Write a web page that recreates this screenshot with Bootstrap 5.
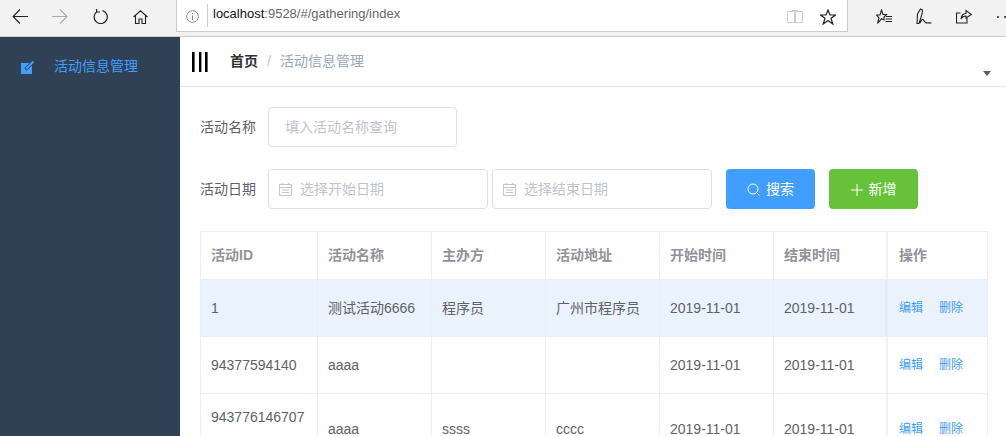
<!DOCTYPE html>
<html lang="zh-CN">
<head>
    <meta charset="UTF-8">
    <meta name="viewport" content="width=device-width, initial-scale=1.0">
    <title>活动信息管理</title>
    <link href="https://cdn.jsdelivr.net/npm/bootstrap@5.3.0/dist/css/bootstrap.min.css" rel="stylesheet">
    <style>
        html, body { height: 100%; overflow: hidden; }
        body { font-family: "Liberation Sans", "Noto Sans CJK SC", sans-serif; font-size: 14px; color: #606266; background: #fff; }
        .edge-bar { height: 37px; background: #f2f2f2; border-bottom: 1px solid #ccc; }
        .edge-btn { width: 40px; height: 33px; flex: none; }
        .edge-url { width: 672px; height: 32px; margin: 0 16px; background: #fff; border: 1px solid #ccc; border-top: 0; flex: none; font-size: 13px; color: #666; }
        .edge-url b { font-weight: 400; color: #111; }
        .url-info { width: 30px; height: 33px; flex: none; }
        .url-text { border-left: 1px solid #ccc; height: 23px; padding-left: 5px; line-height: 20px; margin-top: 4px; }
        .url-book { width: 28px; height: 33px; flex: none; }
        .url-star { width: 38px; height: 33px; flex: none; }
        .app-shell { height: 399px; }
        .side-menu { width: 180px; background: #304156; flex: none; color: #409eff; padding: 19px 0 0 21px; }
        .side-menu span { margin-left: 15px; }
        .main-pane { flex: 1; min-width: 0; overflow: hidden; }
        .top-nav { height: 50px; border-bottom: 1px solid #e6e6e6; padding: 0 0 0 12px; position: relative; }
        .crumb { margin-left: 22px; font-weight: 700; color: #303133; }
        .crumb-sep { margin: 0 9px; color: #c0c4cc; }
        .crumb-now { color: #97a8be; }
        .nav-caret { position: absolute; right: 15px; top: 34px; width: 0; height: 0; border: 4px solid transparent; border-top: 5px solid #5a5e66; border-bottom: 0; }
        .query-area { padding: 20px 18px 0 20px; }
        .field-row { height: 40px; margin-bottom: 22px; }
        .field-label { width: 68px; flex: none; }
        .fake-input { height: 40px; border: 1px solid #dcdfe6; border-radius: 4px; color: #c0c4cc; background: #fff; flex: none; }
        .name-input { width: 189px; padding-left: 16px; }
        .date-input { width: 220px; padding-left: 10px; margin-right: 4px; }
        .date-input svg { margin-right: 8px; }
        .act-btn { width: 89px; height: 40px; border: 0; border-radius: 4px; color: #fff; font-size: 14px; padding: 0; }
        .act-search { background: #409eff; margin-left: 10px; }
        .act-add { background: #67c23a; margin-left: 14px; }
        .act-btn svg { margin-right: 6px; }
        .data-grid { width: 788px; margin: 0; table-layout: fixed; border-collapse: separate; border-spacing: 0; border-top: 1px solid #ebeef5; border-left: 1px solid #ebeef5; color: #606266; }
        .data-grid th, .data-grid td { border: 0; border-right: 1px solid #ebeef5; border-bottom: 1px solid #ebeef5; padding: 0 10px; vertical-align: middle; font-size: 14px; line-height: 23px; background: transparent; color: inherit; box-shadow: none; }
        .data-grid th { height: 48px; color: #909399; font-weight: 700; }
        .data-grid td { height: 57px; }
        .data-grid td.tall-cell { height: 71px; padding-bottom: 23px; }
        .data-grid tr.row-now td { background-color: #eaf2fd; }
        .data-grid .col-fade { background-image: linear-gradient(to left, rgba(0,0,0,.05), transparent 3px); }
        .data-grid .col-ops { padding: 0 0 0 11px; white-space: nowrap; }
        .op-link { font-size: 12px; color: #409eff; text-decoration: none; margin-right: 16px; }
        .op-link:last-child { margin-right: 0; }
    </style>
</head>
<body>
    <div class="edge-bar d-flex">
        <div class="edge-btn d-flex align-items-center justify-content-center">
            <svg width="16" height="15" viewBox="0 0 16 15" fill="none" stroke="#222" stroke-width="1.1"><path d="M1 7.5H16M8 .5L1 7.5L8 14.5"/></svg>
        </div>
        <div class="edge-btn d-flex align-items-center justify-content-center">
            <svg width="16" height="15" viewBox="0 0 16 15" fill="none" stroke="#aaa" stroke-width="1.1"><path d="M0 7.5H15M8 .5L15 7.5L8 14.5"/></svg>
        </div>
        <div class="edge-btn d-flex align-items-center justify-content-center">
            <svg width="15" height="15" viewBox="0 0 15 15" fill="none" stroke="#222" stroke-width="1.2"><path d="M4 2.5A6.6 6.6 0 1 0 9.5 1.6M3.6 0V3H7"/></svg>
        </div>
        <div class="edge-btn d-flex align-items-center justify-content-center">
            <svg width="15" height="14" viewBox="0 0 15 14" fill="none" stroke="#222" stroke-width="1.1"><path d="M.5 7L7.5 .8L14.5 7M2.5 5.5V13.5H6V9H9V13.5H12.5V5.5"/></svg>
        </div>
        <div class="edge-url d-flex">
            <div class="url-info d-flex align-items-center justify-content-center">
                <svg width="13" height="13" viewBox="0 0 13 13" fill="none" stroke="#888"><circle cx="6.5" cy="6.5" r="5.8"/><path d="M6.5 5.5V10M6.5 3V4"/></svg>
            </div>
            <div class="url-text flex-grow-1"><b>localhost</b>:9528/#/gathering/index</div>
            <div class="url-book d-flex align-items-center justify-content-center">
                <svg width="16" height="14" viewBox="0 0 16 14" fill="none" stroke="#ccc"><path d="M.5 1.5H7.5V12.5H.5ZM8.5 1.5H15.5V12.5H8.5ZM5 .5H11"/></svg>
            </div>
            <div class="url-star d-flex align-items-center justify-content-center">
                <svg width="16" height="16" viewBox="0 0 16 16" fill="none" stroke="#222" stroke-width="1.2"><path d="M8 1L10 6H15.5L11 9.3L12.8 15L8 11.5L3.2 15L5 9.3L.5 6H6Z"/></svg>
            </div>
        </div>
        <div class="edge-btn d-flex align-items-center justify-content-center">
            <svg width="16" height="16" viewBox="0 0 16 16" fill="none" stroke="#222" stroke-width="1.1"><path d="M5.5 1L7 5.5H10.5L8 8V11L5.5 9.8L1.5 14.5L3 9L.5 6H4ZM10 7.5H16M9.5 10H16M9.5 12.5H16"/></svg>
        </div>
        <div class="edge-btn d-flex align-items-center justify-content-center">
            <svg width="16" height="17" viewBox="0 0 16 17" fill="none" stroke="#222" stroke-width="1.1"><path d="M1 15.5L1.5 6L4.5 1L6.5 2L6 6L3 15.5ZM4 15C7 8 7.5 13 9.5 14.5C11 15.5 13 14.5 15.5 15"/></svg>
        </div>
        <div class="edge-btn d-flex align-items-center justify-content-center">
            <svg width="16" height="15" viewBox="0 0 16 15" fill="none" stroke="#222" stroke-width="1.1"><path d="M4.5 4H.5V14H11V9M5 10C5 6 8 4.5 10 4.5V1.5L15.5 5.5L10 9V7C8 7 6 8 5 10Z"/></svg>
        </div>
        <div class="edge-btn d-flex align-items-center justify-content-center">
            <svg width="16" height="4" viewBox="0 0 16 4" fill="#222"><circle cx="2" cy="2" r="1"/><circle cx="9" cy="2" r="1"/><circle cx="16" cy="2" r="1"/></svg>
        </div>
    </div>

    <div class="app-shell d-flex">
        <div class="side-menu">
            <svg width="14" height="14" viewBox="0 0 14 14"><rect y="3" width="11" height="11" fill="#409eff"/><path stroke="#304156" stroke-width="3.4" d="M4.5 9.5L10 4"/><path stroke="#409eff" stroke-width="1.8" d="M5 9L12.5 1.5"/></svg>
            <span>活动信息管理</span>
        </div>
        <div class="main-pane">
            <div class="top-nav d-flex align-items-center">
                <svg width="16" height="20" viewBox="0 0 16 20" fill="#000"><rect width="2.6" height="20"/><rect x="7" width="2.4" height="20"/><rect x="13" width="2.6" height="20"/></svg>
                <span class="crumb">首页</span>
                <span class="crumb-sep">/</span>
                <span class="crumb-now">活动信息管理</span>
                <div class="nav-caret"></div>
            </div>
            <div class="query-area">
                <div class="field-row d-flex align-items-center">
                    <div class="field-label">活动名称</div>
                    <div class="fake-input name-input d-flex align-items-center">填入活动名称查询</div>
                </div>
                <div class="field-row d-flex align-items-center">
                    <div class="field-label">活动日期</div>
                    <div class="fake-input date-input d-flex align-items-center">
                        <svg width="13" height="13" viewBox="0 0 13 13" fill="none" stroke="#c0c4cc"><path d="M.5 1.5H12.5V12.5H.5ZM.5 4.5H12.5M3 7H10M3 9.5H10M3.5 0V2M9.5 0V2"/></svg>选择开始日期
                    </div>
                    <div class="fake-input date-input d-flex align-items-center">
                        <svg width="13" height="13" viewBox="0 0 13 13" fill="none" stroke="#c0c4cc"><path d="M.5 1.5H12.5V12.5H.5ZM.5 4.5H12.5M3 7H10M3 9.5H10M3.5 0V2M9.5 0V2"/></svg>选择结束日期
                    </div>
                    <button class="act-btn act-search" type="button">
                        <svg width="13" height="13" viewBox="0 0 13 13" fill="none" stroke="#fff"><circle cx="6" cy="6" r="5"/><path d="M9.5 9.5L12.5 12.5"/></svg>搜索
                    </button>
                    <button class="act-btn act-add" type="button">
                        <svg width="12" height="12" viewBox="0 0 12 12" fill="none" stroke="#fff"><path d="M6 0V12M0 6H12"/></svg>新增
                    </button>
                </div>
                <table class="table data-grid">
                    <colgroup>
                        <col style="width:117px"><col style="width:114px"><col style="width:114px"><col style="width:114px"><col style="width:114px"><col style="width:114px"><col style="width:100px">
                    </colgroup>
                    <thead>
                        <tr><th>活动ID</th><th>活动名称</th><th>主办方</th><th>活动地址</th><th>开始时间</th><th class="col-fade">结束时间</th><th class="col-ops">操作</th></tr>
                    </thead>
                    <tbody>
                        <tr class="row-now">
                            <td>1</td><td>测试活动6666</td><td>程序员</td><td>广州市程序员</td><td>2019-11-01</td><td class="col-fade">2019-11-01</td>
                            <td class="col-ops"><a class="op-link" href="#">编辑</a><a class="op-link" href="#">删除</a></td>
                        </tr>
                        <tr>
                            <td>94377594140</td><td>aaaa</td><td></td><td></td><td>2019-11-01</td><td class="col-fade">2019-11-01</td>
                            <td class="col-ops"><a class="op-link" href="#">编辑</a><a class="op-link" href="#">删除</a></td>
                        </tr>
                        <tr>
                            <td class="tall-cell">943776146707</td><td>aaaa</td><td>ssss</td><td>cccc</td><td>2019-11-01</td><td class="col-fade">2019-11-01</td>
                            <td class="col-ops"><a class="op-link" href="#">编辑</a><a class="op-link" href="#">删除</a></td>
                        </tr>
                    </tbody>
                </table>
            </div>
        </div>
    </div>

    <script src="https://cdn.jsdelivr.net/npm/bootstrap@5.3.0/dist/js/bootstrap.bundle.min.js"></script>
</body>
</html>
